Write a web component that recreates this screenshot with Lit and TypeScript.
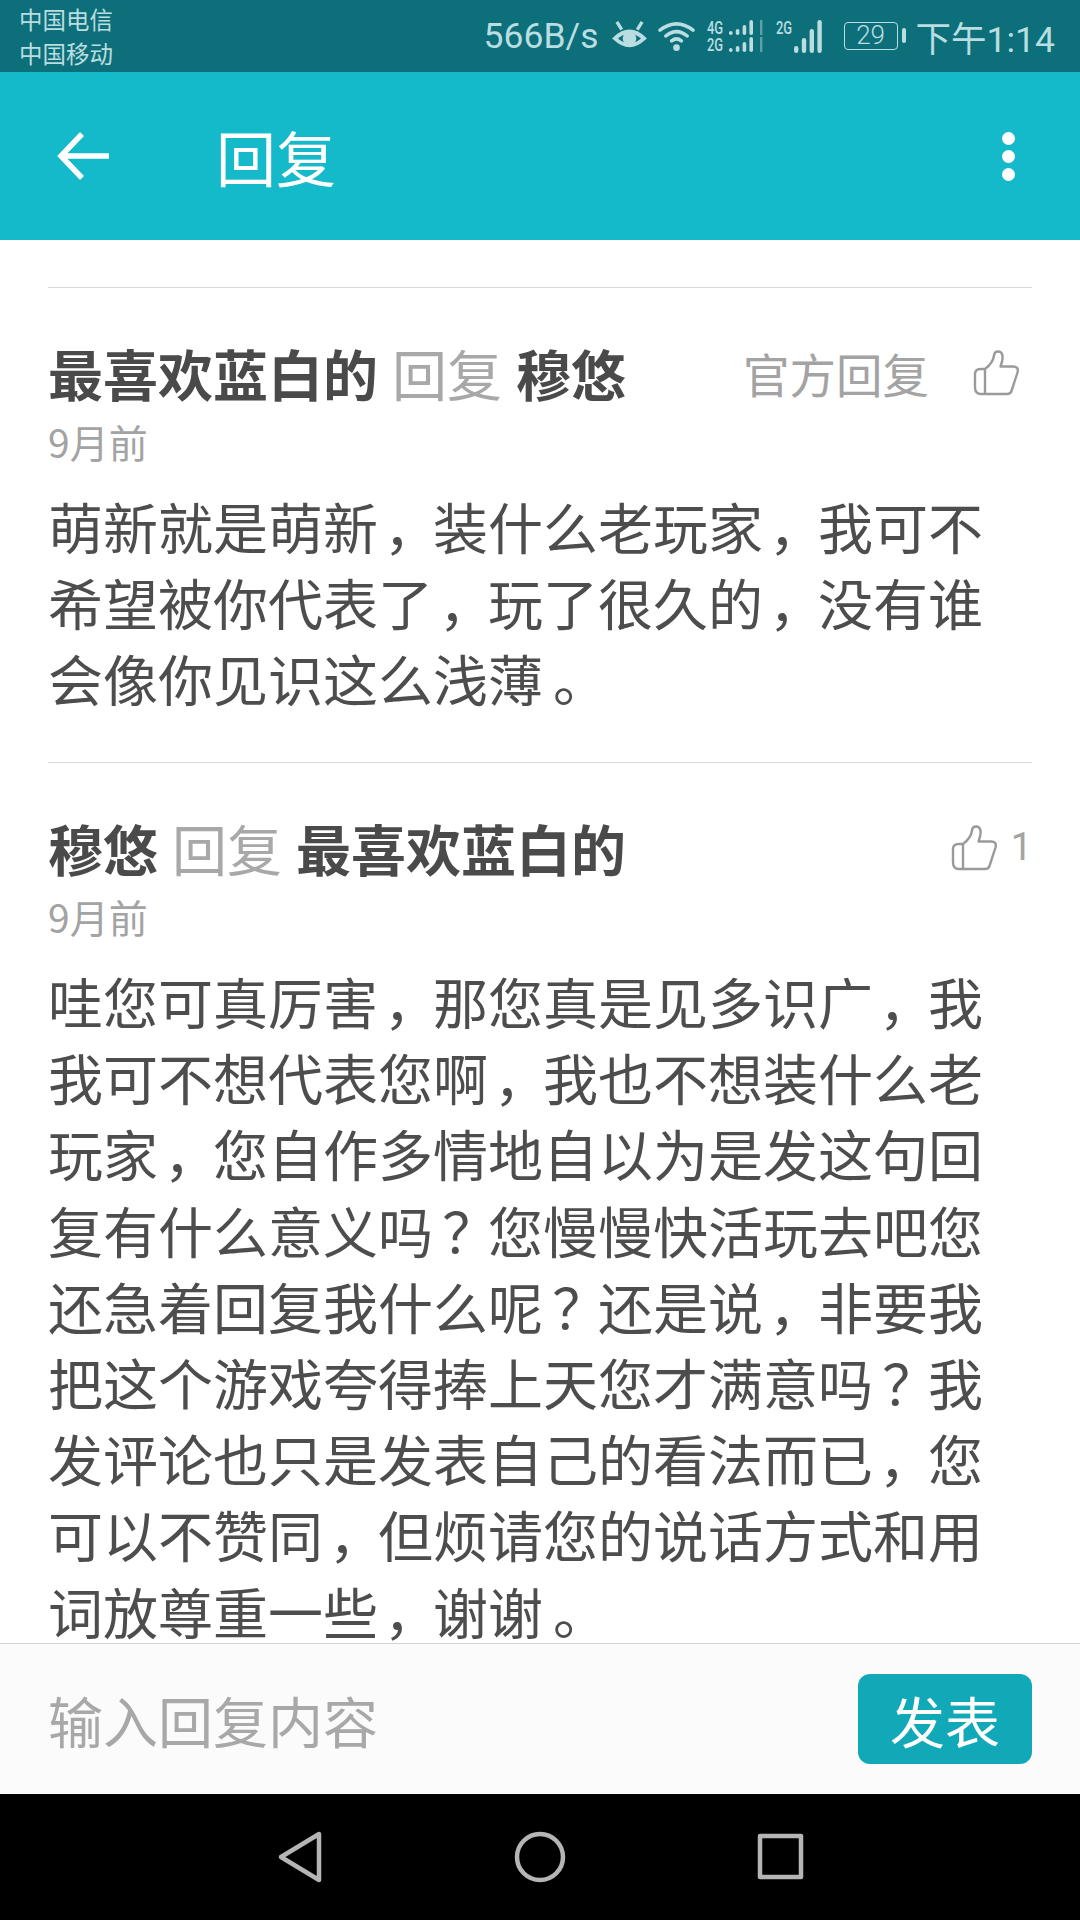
import { LitElement, html, css, svg } from "lit";
import { customElement } from "lit/decorators.js";

const thumb = html`<svg class="thumb" viewBox="0 0 46 46" fill="none" stroke="#9a9a9a" stroke-width="2.4" stroke-linejoin="round" stroke-linecap="round">
  <path d="M12 19H7.5Q2 19 2 24.5V37Q2 44 8 44H34Q37.5 44 38.5 41L44.5 22.5Q46 16.5 40 16.5H27.5Q30 10 29.5 6Q29 1.5 25 1.5Q21.5 1.5 21 5.5Q20 13 12 19V44"/>
</svg>`;

const bars = (hs: number[], w: number, gap: number, h: number) => svg`${hs.map((v, i) =>
  svg`<rect x=${i * (w + gap)} y=${h - v} width=${w} height=${v} rx=${w / 2} fill="#b9dde0"/>`)}`;

/* The reference's font sets ，。？ nearer the middle of the em box than Noto SC does. */
const punct = (t: string) => t.split(/([，。？])/).map((part, i) =>
  i % 2 ? html`<span class="p">${part}</span>` : part);

@customElement("app-root")
export class AppRoot extends LitElement {
  static styles = css`
    :host { display: block; width: 1080px; height: 1920px; background: #fff; font-family: "Noto Sans CJK SC", "Noto Sans", sans-serif; }
    .page { height: 1920px; display: flex; flex-direction: column; overflow: hidden; }
    .status { height: 72px; flex: none; background: #0d6f79; color: #b9dde0; display: flex; align-items: center; justify-content: space-between; padding: 0 25px 0 19px; }
    .carriers { font-size: 23.5px; line-height: 33.5px; display: flex; flex-direction: column; margin-top: 1px; }
    .sys { display: flex; align-items: center; font-family: Roboto, sans-serif; }
    .speed { font-size: 35.5px; margin-right: 13px; }
    .eye { width: 35px; height: 35px; margin-right: 11px; }
    .wifi { width: 37px; height: 32px; margin-right: 12px; }
    .sim { display: grid; grid-template-columns: 17px 34px; column-gap: 5px; align-items: center; margin-right: 13px; }
    .sim svg { width: 34px; height: 15px; }
    .tiny { display: block; font-size: 18px; line-height: 17px; font-weight: 500; transform: scaleX(.72); transform-origin: left center; white-space: nowrap; }
    .sig { display: flex; align-items: flex-start; margin-right: 16px; }
    .sig .tiny { width: 18px; }
    .sig svg { width: 34px; height: 34px; }
    .batt { width: 54px; height: 28px; box-sizing: border-box; border: 1.5px solid #b9dde0; border-radius: 4px; font-size: 26px; line-height: 25px; text-align: center; font-weight: 300; position: relative; margin-right: 18px; }
    .batt::after { content: ""; position: absolute; right: -9px; top: 5px; width: 4px; height: 15px; background: #b9dde0; border-radius: 2px; }
    .time { font-size: 35.5px; font-family: Roboto, "Noto Sans CJK SC", sans-serif; }
    .bar { height: 168px; flex: none; background: #14b9ca; color: #fff; display: flex; align-items: center; }
    .back { width: 52px; height: 48px; margin-left: 57px; }
    .title { font-size: 60px; margin-left: 107px; flex: 1; line-height: 64px; }
    .dots { width: 16px; height: 49px; margin-right: 64px; display: flex; flex-direction: column; justify-content: space-between; align-items: center; }
    .dots i { width: 13px; height: 13px; border-radius: 50%; background: #fff; }
    .list { flex: 1; min-height: 0; padding: 47px 48px 0; }
    .item { border-top: 1.5px solid #d9d9d9; height: 475px; box-sizing: border-box; }
    .item + .item { height: auto; }
    .head { display: flex; align-items: center; height: 55px; margin-top: 57px; font-size: 55px; line-height: 55px; white-space: nowrap; }
    .name { font-weight: 700; color: #4a4a4a; }
    .verb { color: #a8a8a8; margin: 0 14px; }
    .spacer { flex: 1; }
    .official { font-size: 46.5px; color: #a3a3a3; margin-right: 44px; }
    .thumb { width: 46px; height: 46px; flex: none; margin-right: 13px; }
    .count { font-family: Roboto, sans-serif; font-size: 38px; color: #a3a3a3; margin-left: 14px; }
    .head.liked .thumb { margin-right: 0; }
    .time-ago { font-size: 39px; line-height: 44px; color: #a3a3a3; margin-top: 19px; }
    .text { width: 945px; font-size: 55px; line-height: 76.2px; color: #4d4d4d; margin-top: 24px; }
    .p { display: inline-block; box-sizing: border-box; width: 1em; padding-right: .16em; text-align: center; font-feature-settings: "palt"; }
    .input { position: relative; height: 151px; flex: none; box-sizing: border-box; border-top: 1.5px solid #d4d4d4; background: #fbfbfb; display: flex; align-items: center; justify-content: space-between; padding: 0 48px; }
    .ph { font-size: 55px; color: #a8a8a8; }
    .send { width: 174px; height: 90px; background: #11a9b8; color: #fff; border-radius: 12px; font-size: 55px; display: flex; align-items: center; justify-content: center; }
    .nav { height: 126px; flex: none; background: #000; display: flex; align-items: center; justify-content: center; }
    .nav svg { width: 240px; height: 60px; }
  `;

  render() {
    return html`<div class="page">
      <div class="status">
        <div class="carriers"><span>中国电信</span><span>中国移动</span></div>
        <div class="sys">
          <span class="speed">566B/s</span>
          <svg class="eye" viewBox="0 0 36 36" fill="none" stroke="#b9dde0" stroke-width="4">
            <path d="M3 20Q18 6 33 20Q18 34 3 20Z"/><circle cx="18" cy="20" r="7" fill="#b9dde0" stroke="none"/>
            <path d="M5 3L10 11M31 3L26 11" stroke-width="3.4"/>
          </svg>
          <svg class="wifi" viewBox="0 0 38 32" fill="none" stroke="#b9dde0" stroke-width="3.6" stroke-linecap="round">
            <path d="M2 10Q19 -3 36 10M8 16Q19 7 30 16M14 21Q19 17 24 21"/><circle cx="19" cy="28" r="3.4" fill="#b9dde0" stroke="none"/>
          </svg>
          <div class="sim">
            <span class="tiny">4G</span><svg viewBox="0 0 34 15">${bars([4, 6, 10, 15], 3.6, 3.2, 15)}<rect x="31" y="0" width="2.4" height="15" fill="#5f9fa6"/></svg>
            <span class="tiny">2G</span><svg viewBox="0 0 34 15">${bars([4, 6, 10, 15], 3.6, 3.2, 15)}<rect x="31" y="0" width="2.4" height="15" fill="#5f9fa6"/></svg>
          </div>
          <div class="sig"><span class="tiny">2G</span><svg viewBox="0 0 34 34">${bars([7, 15, 24, 33], 4.4, 3.4, 34)}</svg></div>
          <div class="batt">29</div>
          <span class="time">下午1:14</span>
        </div>
      </div>
      <div class="bar">
        <svg class="back" viewBox="0 0 52 48" fill="none" stroke="#fff" stroke-width="5.5"><path d="M52 24H5M25 2L4 24L25 46"/></svg>
        <span class="title">回复</span>
        <div class="dots"><i></i><i></i><i></i></div>
      </div>
      <div class="list">
        <div class="item">
          <div class="head">
            <span class="name">最喜欢蓝白的</span><span class="verb">回复</span><span class="name">穆悠</span>
            <span class="spacer"></span><span class="official">官方回复</span>${thumb}
          </div>
          <div class="time-ago">9月前</div>
          <div class="text">${punct("萌新就是萌新，装什么老玩家，我可不希望被你代表了，玩了很久的，没有谁会像你见识这么浅薄。")}</div>
        </div>
        <div class="item">
          <div class="head liked">
            <span class="name">穆悠</span><span class="verb">回复</span><span class="name">最喜欢蓝白的</span>
            <span class="spacer"></span>${thumb}<span class="count">1</span>
          </div>
          <div class="time-ago">9月前</div>
          <div class="text">${punct("哇您可真厉害，那您真是见多识广，我我可不想代表您啊，我也不想装什么老玩家，您自作多情地自以为是发这句回复有什么意义吗？您慢慢快活玩去吧您还急着回复我什么呢？还是说，非要我把这个游戏夸得捧上天您才满意吗？我发评论也只是发表自己的看法而已，您可以不赞同，但烦请您的说话方式和用词放尊重一些，谢谢。")}</div>
        </div>
      </div>
      <div class="input"><span class="ph">输入回复内容</span><div class="send">发表</div></div>
      <div class="nav">
        <svg viewBox="0 0 240 60" fill="none" stroke="#b5b5b5" stroke-width="4.5" stroke-linejoin="round"><path d="M139 7V53L101 30Z"/></svg>
        <svg viewBox="0 0 240 60" fill="none" stroke="#b5b5b5" stroke-width="4.5"><circle cx="120" cy="30" r="23"/></svg>
        <svg viewBox="0 0 240 60" fill="none" stroke="#b5b5b5" stroke-width="4.5" stroke-linejoin="round"><path d="M100 9H141V50H100Z"/></svg>
      </div>
    </div>`;
  }
}
